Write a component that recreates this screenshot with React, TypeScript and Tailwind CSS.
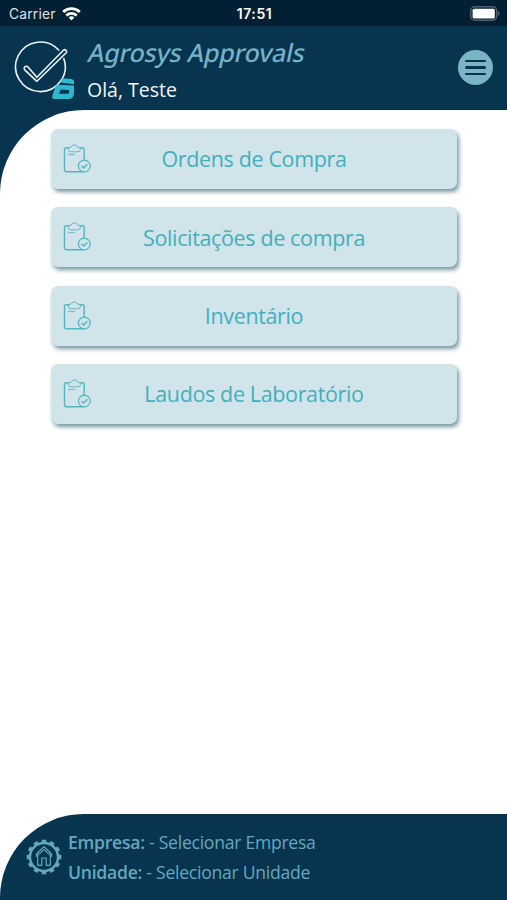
import React from 'react';

interface MenuOption {
  id: string;
  label: string;
}

const OPTIONS: MenuOption[] = [
  { id: 'ordens', label: 'Ordens de Compra' },
  { id: 'solicitacoes', label: 'Solicitações de compra' },
  { id: 'inventario', label: 'Inventário' },
  { id: 'laudos', label: 'Laudos de Laboratório' },
];

const GEAR_TEETH = [0, 30, 60, 90, 120, 150, 180, 210, 240, 270, 300, 330];

const WifiIcon = () => (
  <svg width="19" height="14" viewBox="0 0 19 14" fill="none" stroke="#fff" strokeWidth="2.8">
    <path d="M1.2 5C5.9 .6 13.1 .6 17.8 5" />
    <path d="M4.3 8.5c2.9-2.8 7.5-2.8 10.4 0" />
    <path d="M9.5 13.4 6.7 10.6a4 4 0 0 1 5.6 0z" fill="#fff" stroke="none" />
  </svg>
);

const BatteryIcon = () => (
  <svg width="31" height="15" viewBox="0 0 31 15">
    <rect x="1.7" y=".7" width="26" height="13.6" rx="4" fill="none" stroke="#53616c" strokeWidth="1.4" />
    <rect x="3.6" y="2.8" width="22.2" height="9.6" rx="1.5" fill="#fff" />
    <path d="M28.8 5c2.2.8 2.2 4.2 0 5z" fill="#53616c" />
  </svg>
);

const Logo = () => (
  <svg width="62" height="60" viewBox="0 0 62 60" fill="none">
    <path d="M45.2 9.6A24.8 24.8 0 1 0 49.6 17" stroke="#eaf3f8" strokeWidth="1.6" />
    <path
      d="M10.3 26.7c.7-1.7 2.9-1.9 3.9-.4l8.7 10L49.4 9.3c1.9-1.6 4.2.6 2.8 2.5L22.9 40.3 10.7 28.8q-.9-.9-.4-2.1z"
      stroke="#eaf3f8"
      strokeWidth="1.6"
      strokeLinejoin="round"
    />
    <path d="M48.5 37.2l8.5.7q3 .3 3 3v2.300L46.500 41.600z" fill="#2db8cd" />
    <path
      fillRule="evenodd"
      d="M44.500 43.700 60 44.600V51q0 7-5 7H40.500q-3 0-2.200-3l2.600-8.300q.9-3 3.600-3zM46.700 48.600l-1.700 4.200h8.700q1.500 0 1.500-1.700v-2.200z"
      fill="#2db8cd"
    />
  </svg>
);

const ClipboardIcon = () => (
  <svg width="28" height="30" viewBox="0 0 28 30" fill="none" stroke="#53b5c2" strokeWidth="1.4">
    <rect x="1.5" y="3.7" width="19.7" height="24" rx="1.8" />
    <path
      d="M8.200 7.800Q5.300 7.800 5.300 5.400T8.200 3Q9 .9 11.400 .9T14.600 3q2.900 0 2.900 2.400t-2.900 2.400z"
      fill="#d0e4e9"
      strokeWidth=".9"
    />
    <path d="M5 10.500h7" strokeWidth="1.200" opacity=".7" />
    <circle cx="21.300" cy="22" r="5.900" fill="#d0e4e9" strokeWidth="1.200" />
    <path d="m18.500 21.900 2.200 2.200 3.600-3.800" />
  </svg>
);

const GearHomeIcon = () => (
  <svg width="36" height="36" viewBox="0 0 36 36" fill="none" stroke="#65a8be">
    <circle cx="18" cy="18" r="14" strokeWidth="2.4" />
    {GEAR_TEETH.map(angle => (
      <path key={angle} d="M18 .7V4.5" strokeWidth="4.5" transform={`rotate(${angle} 18 18)`} />
    ))}
    <path
      d="M10.500 17.200v-2.500L18 7.800l7.500 6.900v2.500L18 10.600zM11.700 16.500v9.800h4.100V19h4.400v7.300h4.100v-9.800"
      strokeWidth="1.200"
      strokeLinejoin="round"
    />
  </svg>
);

const StatusBar = () => (
  <div className="grid h-[26px] grid-cols-3 items-center bg-[#021f33] pr-[7px] pl-[9px] font-['Inter',sans-serif] text-white">
    <div className="flex items-center gap-1.5 pt-0.5">
      <span className="pt-px text-[13.8px] leading-none tracking-[0.2px] text-[#dce3e8]">Carrier</span>
      <WifiIcon />
    </div>
    <span className="pt-0.5 text-center text-[14px] leading-none font-semibold tracking-[0.6px]">17:51</span>
    <div className="flex justify-end pt-px">
      <BatteryIcon />
    </div>
  </div>
);

const Header = () => (
  <header className="flex h-[84px] items-start bg-[#07344f] px-[14px]">
    <div className="mt-[15px] w-[73px] shrink-0">
      <Logo />
    </div>
    <div className="flex-1 whitespace-nowrap">
      {/* slanted upright letters, the italic face has other letter shapes */}
      <h1 className="mt-[9px] w-fit origin-center -skew-x-12 pl-[2px] font-['Noto_Sans',sans-serif] text-[25px] leading-[34px] font-medium tracking-[-0.2px] text-[#76b2c5]">
        Agrosys Approvals
      </h1>
      <p className="mt-[7px] text-[19.5px] leading-[27px] text-[#f0f5f8]">Olá, Teste</p>
    </div>
    <button aria-label="Menu" className="mt-[24px] flex size-[35px] flex-col items-center justify-center gap-[4px] rounded-full bg-[#7ab4c5]">
      <span className="h-[2.5px] w-[21px] rounded-full bg-[#07344f]" />
      <span className="h-[2.5px] w-[21px] rounded-full bg-[#07344f]" />
      <span className="h-[2.5px] w-[21px] rounded-full bg-[#07344f]" />
    </button>
  </header>
);

const OptionCard = ({ option }: { option: MenuOption }) => (
  <button className="grid h-[60px] w-full grid-cols-[40px_1fr_40px] items-center rounded-[7px] bg-[#d0e4e9] shadow-[2px_3px_4px_#7799a3]">
    <span className="pl-3">
      <ClipboardIcon />
    </span>
    <span className="pt-px text-center text-[21.5px] tracking-[-0.36px] whitespace-nowrap text-[#43afbd]">{option.label}</span>
  </button>
);

const Footer = () => (
  <footer className="flex h-[86px] items-start rounded-tl-[84px] bg-[#07344f] pl-[26px] text-[#65a8be]">
    <div className="mt-[25px] w-[42px] shrink-0">
      <GearHomeIcon />
    </div>
    <div className="mt-[13px] text-[17.6px] leading-[30px] tracking-[-0.27px] whitespace-nowrap">
      <p><span className="font-semibold">Empresa:</span> - Selecionar Empresa</p>
      <p><span className="font-semibold">Unidade:</span> - Selecionar Unidade</p>
    </div>
  </footer>
);

export default function App() {
  return (
    <div className="flex h-[900px] w-[507px] flex-col overflow-hidden bg-white font-['Open_Sans','Noto_Sans',sans-serif]">
      <StatusBar />
      <Header />
      <div className="flex flex-1 flex-col bg-linear-to-b from-[#07344f] from-50% to-white to-50%">
        <main className="flex flex-1 flex-col gap-[18.3px] rounded-tl-[84px] bg-white pt-[19px] pr-[50px] pl-[51px]">
          {OPTIONS.map(option => (
            <OptionCard key={option.id} option={option} />
          ))}
        </main>
      </div>
      <Footer />
    </div>
  );
}
